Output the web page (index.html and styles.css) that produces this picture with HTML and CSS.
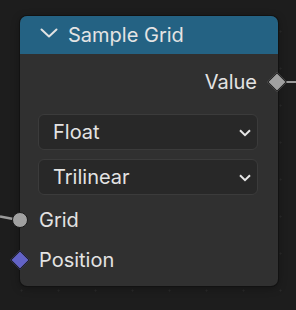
FILE: index.html
```html
<!DOCTYPE html>
<html lang="en">
<head>
    <meta charset="UTF-8">
    <meta name="viewport" content="width=device-width, initial-scale=1.0">
    <title>Sample Grid</title>
    <link rel="stylesheet" href="styles.css">
</head>
<body>
    <!-- links going into / out of the node -->
    <svg class="links" width="296" height="310" viewBox="0 0 296 310">
        <line x1="0" y1="216.5" x2="16" y2="219.5" stroke="#9b9b9b" stroke-width="2.5"/>
        <line x1="282" y1="82" x2="296" y2="82" stroke="#9b9b9b" stroke-width="2"/>
    </svg>

    <div class="node">
        <div class="header">
            <svg class="collapse" width="18" height="10" viewBox="0 0 18 10">
                <polyline points="1.5,1.5 9,8.5 16.5,1.5" fill="none" stroke="#e2e2e2" stroke-width="2" stroke-linecap="round" stroke-linejoin="round"/>
            </svg>
            <span class="title">Sample Grid</span>
        </div>

        <div class="body">
            <div class="row output">
                <span class="label">Value</span>
                <span class="socket diamond grey right"></span>
            </div>

            <div class="menus">
                <div class="dropdown">
                    <span>Float</span>
                    <svg width="12" height="8" viewBox="0 0 12 8">
                        <polyline points="1,1.2 6,6.2 11,1.2" fill="none" stroke="#e6e6e6" stroke-width="2"/>
                    </svg>
                </div>
                <div class="dropdown">
                    <span>Trilinear</span>
                    <svg width="12" height="8" viewBox="0 0 12 8">
                        <polyline points="1,1.2 6,6.2 11,1.2" fill="none" stroke="#e6e6e6" stroke-width="2"/>
                    </svg>
                </div>
            </div>

            <div class="row input">
                <span class="socket circle left"></span>
                <span class="label">Grid</span>
            </div>
            <div class="row input">
                <span class="socket diamond purple left"></span>
                <span class="label">Position</span>
            </div>
        </div>
    </div>
</body>
</html>
```

FILE: styles.css
```css
* {
    box-sizing: border-box;
    margin: 0;
    padding: 0;
}

body {
    width: 296px;
    height: 310px;
    overflow: hidden;
    padding: 16px 0 0 20px;
    background-color: #1d1d1d;
    background-image: radial-gradient(circle, #2a2a2a 0.8px, transparent 1.2px);
    background-size: 37px 37px;
    background-position: 3px 13px;
    font-family: Inter, 'Noto Sans', sans-serif;
    color: #e3e3e3;
}

.links {
    position: absolute;
    left: 0;
    top: 0;
}

.node {
    position: relative;
    width: 258px;
    height: 270px;
    background: #303030;
    border-radius: 7px;
    box-shadow: 0 0 0 1px #121212, 0 2px 8px rgba(0, 0, 0, 0.35);
}

.header {
    display: flex;
    align-items: center;
    height: 38px;
    padding-left: 20px;
    gap: 10px;
    background: #246283;
    border-radius: 7px 7px 0 0;
}

.collapse {
    margin-top: -4px;
}

.title {
    font-size: 20px;
    color: #e4e4e4;
    margin-top: -1px;
}

.body {
    padding-top: 14px;
}

.row {
    position: relative;
    display: flex;
    align-items: center;
    height: 28px;
    font-size: 20px;
}

.output {
    justify-content: flex-end;
    padding-right: 21px;
}

.input {
    height: 40px;
    padding-left: 19px;
}

.menus {
    display: flex;
    flex-direction: column;
    gap: 9px;
    padding: 18px 20px 5px 18px;
}

.dropdown {
    display: flex;
    align-items: center;
    justify-content: space-between;
    height: 36px;
    padding: 0 6px 0 14px;
    background: #282828;
    border: 1px solid #3b3b3b;
    border-radius: 6px;
    font-size: 20px;
    color: #e3e3e3;
}

.dropdown svg {
    margin-top: 2px;
}

/* sockets sit on the node edge */
.socket {
    position: absolute;
    top: 50%;
}

.socket.left {
    left: 0;
}

.socket.right {
    right: 0;
}

.circle {
    width: 16px;
    height: 16px;
    margin: -8px 0 0 -8px;
    border-radius: 50%;
    background: #a1a1a1;
    border: 1.5px solid #1a1a1a;
}

.diamond {
    width: 14px;
    height: 14px;
    margin-top: -7px;
    border: 1px solid #1a1a1a;
    transform: rotate(45deg);
}

.diamond.left {
    margin-left: -7px;
}

.diamond.right {
    margin-right: -6px;
}

.grey {
    background: #a1a1a1;
}

.purple {
    background: #6363c7;
}
```
